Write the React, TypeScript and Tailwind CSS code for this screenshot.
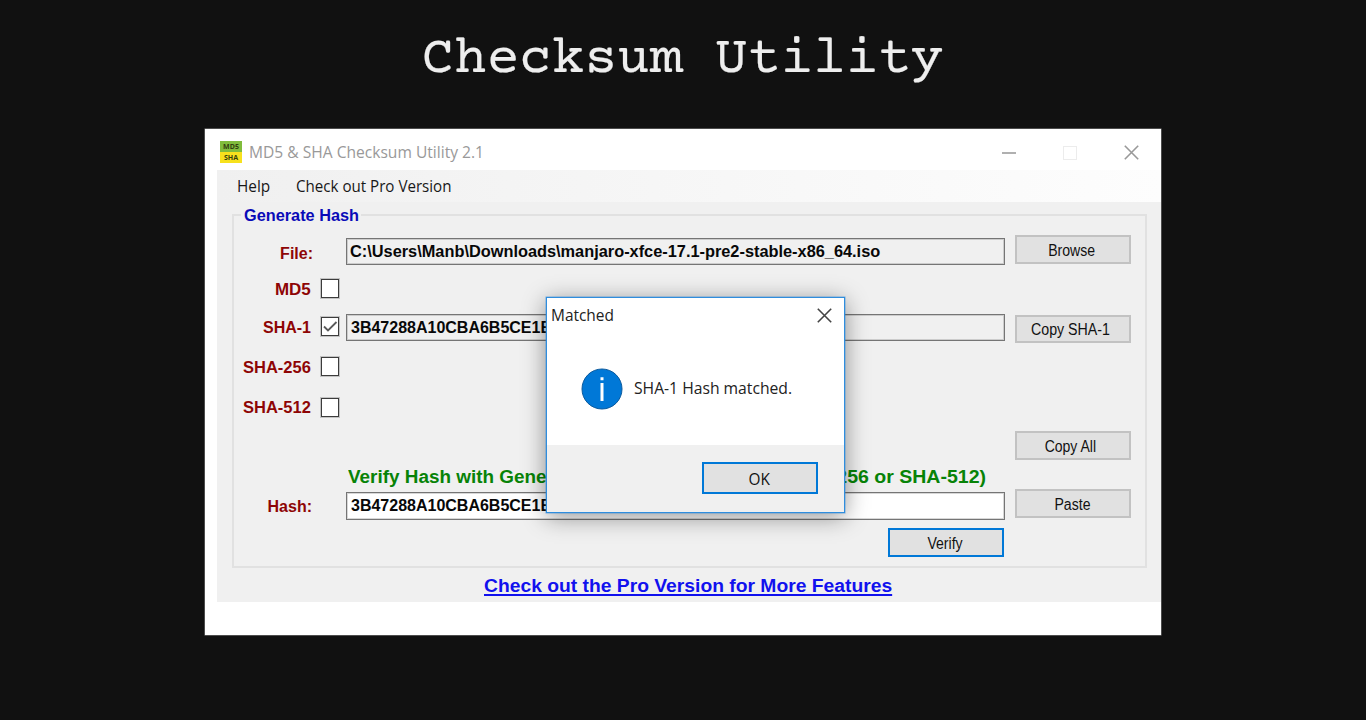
import type { ReactNode } from 'react';

const hash = '3B47288A10CBA6B5CE1E';

function Button({ children, className = '' }: { children: ReactNode; className?: string }) {
  return (
    <button
      className={`flex w-[116px] items-center justify-center bg-[#e1e1e1] pt-[2px] pr-[2px] text-[16px] leading-none whitespace-nowrap text-[#111] ${className}`}
    >
      {children}
    </button>
  );
}

function Label({ children, className = '' }: { children: ReactNode; className?: string }) {
  return (
    <div className={`flex h-5 items-center justify-end pt-px text-[16px] leading-[19px] font-bold whitespace-nowrap text-[#8e0505] ${className}`}>
      {children}
    </div>
  );
}

function Checkbox({ checked = false, className = '' }: { checked?: boolean; className?: string }) {
  return (
    <div className={`flex h-[19px] w-[18px] items-center justify-center border border-[#3c3c3c] bg-white shadow-[0_0_0_1px_rgba(60,60,60,0.25)] ${className}`}>
      {checked && (
        <svg className="size-[15px] shrink-0" viewBox="0 0 15 15" fill="none" stroke="#5a5a5a" strokeWidth="1.8">
          <path d="M1 7.5 L5 11.5 L13.5 3" />
        </svg>
      )}
    </div>
  );
}

function Field({ children, className = '' }: { children: ReactNode; className?: string }) {
  return (
    <div className={`flex items-center overflow-hidden border border-[#757575] pl-[3px] text-[16px] font-bold whitespace-nowrap text-[#080808] shadow-[inset_0_0_0_1px_rgba(110,110,110,0.28)] ${className}`}>
      {children}
    </div>
  );
}

function AppIcon() {
  return (
    <div className="flex h-[22px] w-[22px] flex-col text-center text-[7px] leading-[12px] font-bold text-[#33400f]">
      <span className="h-[11px] bg-[#80bc3c]">MD5</span>
      <span className="h-[11px] bg-[#f7e11d]">SHA</span>
    </div>
  );
}

function Cross({ color }: { color: string }) {
  return (
    <svg className="size-[15px]" viewBox="0 0 15 15" fill="none" stroke={color} strokeWidth="1.6">
      <path d="M0.8 0.8 L14.2 14.2 M14.2 0.8 L0.8 14.2" />
    </svg>
  );
}

function MatchedDialog() {
  return (
    <div className="absolute top-[168px] left-[341px] flex h-[216px] w-[299px] flex-col border border-[#2f8ddd] bg-white font-['Open_Sans',sans-serif] text-[16px] text-[#222] shadow-[0_0_0_0.5px_rgba(47,141,221,0.6),0_4px_22px_rgba(0,0,0,0.42)]">
      <div className="flex h-[34px] items-center justify-between pr-[12px] pl-[4px]">
        <span className="origin-left scale-x-[0.965]">Matched</span>
        <Cross color="#444" />
      </div>
      <div className="flex h-[113px] items-center pl-[34px]">
        <svg className="size-[42px] shrink-0" viewBox="0 0 42 42">
          <circle cx="21" cy="21" r="20" fill="#0078d7" stroke="#0a5a9e" strokeWidth="1" />
          <path d="M21 9.2v3M21 15v18" stroke="white" strokeWidth="3" />
        </svg>
        <span className="-mt-px ml-[11px] origin-left scale-x-[0.98] whitespace-nowrap">SHA-1 Hash matched.</span>
      </div>
      <div className="flex flex-1 items-start justify-end bg-[#f0f0f0] pt-[17px] pr-[26px]">
        <Button className="h-[32px] border-[2.5px] border-[#0078d7]">
          <span className="scale-x-[0.96]">OK</span>
        </Button>
      </div>
    </div>
  );
}

export default function App() {
  return (
    <main className="flex h-[720px] w-[1366px] flex-col items-center overflow-hidden bg-[#111111] font-['Liberation_Sans',sans-serif]">
      <h1 className="flex h-[129px] items-start pt-[30px] pr-px font-['Courier_Prime','Liberation_Mono',monospace] text-[54.4px] leading-[60px] whitespace-nowrap text-[#eeeeee] [-webkit-text-stroke:0.2px_#eeeeee]">
        Checksum Utility
      </h1>
      <div className="relative flex h-[506px] w-[956px] flex-col bg-white shadow-[0_0_0_0.5px_#888]">
        <header className="flex h-[41px] items-center pt-[5px] pl-[15px] font-['Open_Sans',sans-serif]">
          <AppIcon />
          <span className="-mt-px ml-[7px] w-[256px] origin-left scale-x-[0.917] text-[17px] whitespace-nowrap text-[#999]">
            MD5 &amp; SHA Checksum Utility 2.1
          </span>
          <div className="ml-auto flex items-center pt-px pr-[22px]">
            <span className="h-[2px] w-[14px] bg-[#b0b0b0]" />
            <span className="ml-[47px] size-[14px] border-[1.5px] border-[#ececec]" />
            <span className="ml-[47px]">
              <Cross color="#999" />
            </span>
          </div>
        </header>
        <nav className="ml-[12px] flex h-[32px] items-center bg-linear-to-r from-[#f0f0f0] to-[#fdfdfd] pb-px pl-[20px] font-['Open_Sans',sans-serif] text-[16px] whitespace-nowrap text-[#181818]">
          <span className="w-[59px] origin-left scale-x-[0.96]">Help</span>
          <span className="origin-left scale-x-[0.945]">Check out Pro Version</span>
        </nav>
        <section className="ml-[12px] flex h-[400px] flex-col bg-[#f0f0f0] pt-[12px] pl-[15px]">
          <div className="flex h-[354px] w-[915px] flex-col border-2 border-[#e1e1e1]">
            <h2 className="-mt-[10px] ml-[7px] h-[20px] w-[120px] bg-[#f0f0f0] pl-[3px] text-[16px] leading-[20px] font-bold whitespace-nowrap text-[#0a0ab8]">
              <span className="inline-block origin-left scale-x-[1.018]">Generate Hash</span>
            </h2>
            <div className="-mt-px flex flex-1">
              <div className="flex w-[79px] flex-col">
                <Label className="mt-[18px]">File:</Label>
                <Label className="mt-[16px] pr-[2px]"><span className="origin-right scale-x-[1.06]">MD5</span></Label>
                <Label className="mt-[18px] pr-[2px]">SHA-1</Label>
                <Label className="mt-[20px] pr-[2px]"><span className="origin-right scale-x-[1.03]">SHA-256</span></Label>
                <Label className="mt-[20px] pr-[2px]"><span className="origin-right scale-x-[1.03]">SHA-512</span></Label>
                <Label className="mt-[79px] pr-px">Hash:</Label>
              </div>
              <div className="ml-[8px] flex w-[25px] flex-col">
                <Checkbox className="mt-[54px]" />
                <Checkbox checked className="mt-[19px]" />
                <Checkbox className="mt-[21px]" />
                <Checkbox className="mt-[22px]" />
              </div>
              <div className="flex w-[659px] flex-col">
                <Field className="mt-[13px] h-[27px]">
                  <span className="origin-left scale-x-[1.021]">C:\Users\Manb\Downloads\manjaro-xfce-17.1-pre2-stable-x86_64.iso</span>
                </Field>
                <Field className="mt-[49px] h-[27px] pl-[4px]">{hash}</Field>
                <div className="mt-[126px] flex h-[20px] items-center justify-between pr-[19px] pl-[2px] text-[18px] font-bold whitespace-nowrap text-[#078307]">
                  <span className="origin-left scale-x-[1.05]">Verify Hash with Gene</span>
                  <span className="origin-right scale-x-[1.085]">256 or SHA-512)</span>
                </div>
                <Field className="mt-[5px] h-[28px] bg-white pl-[4px]">{hash}</Field>
                <Button className="mt-[8px] ml-[542px] h-[29px] border-[2.5px] border-[#0078d7]">
                  <span className="scale-x-[0.88]">Verify</span>
                </Button>
              </div>
              <div className="ml-[10px] flex flex-col">
                <Button className="mt-[10px] h-[29px] border-2 border-[#c2c2c2]"><span className="scale-x-[0.88]">Browse</span></Button>
                <Button className="mt-[51px] h-[28px] border-2 border-[#c2c2c2] pr-[5px]"><span className="scale-x-[0.888]">Copy SHA-1</span></Button>
                <Button className="mt-[88px] h-[29px] border-2 border-[#c2c2c2] pr-[5px]"><span className="scale-x-[0.875]">Copy All</span></Button>
                <Button className="mt-[29px] h-[29px] border-2 border-[#c2c2c2]"><span className="scale-x-[0.88]">Paste</span></Button>
              </div>
            </div>
          </div>
          <a className="mt-[6px] ml-[252px] w-fit origin-left scale-x-[1.071] text-[18px] leading-[24px] font-bold whitespace-nowrap text-[#1111ee] underline decoration-2 underline-offset-2">
            Check out the Pro Version for More Features
          </a>
        </section>
        <MatchedDialog />
      </div>
    </main>
  );
}
